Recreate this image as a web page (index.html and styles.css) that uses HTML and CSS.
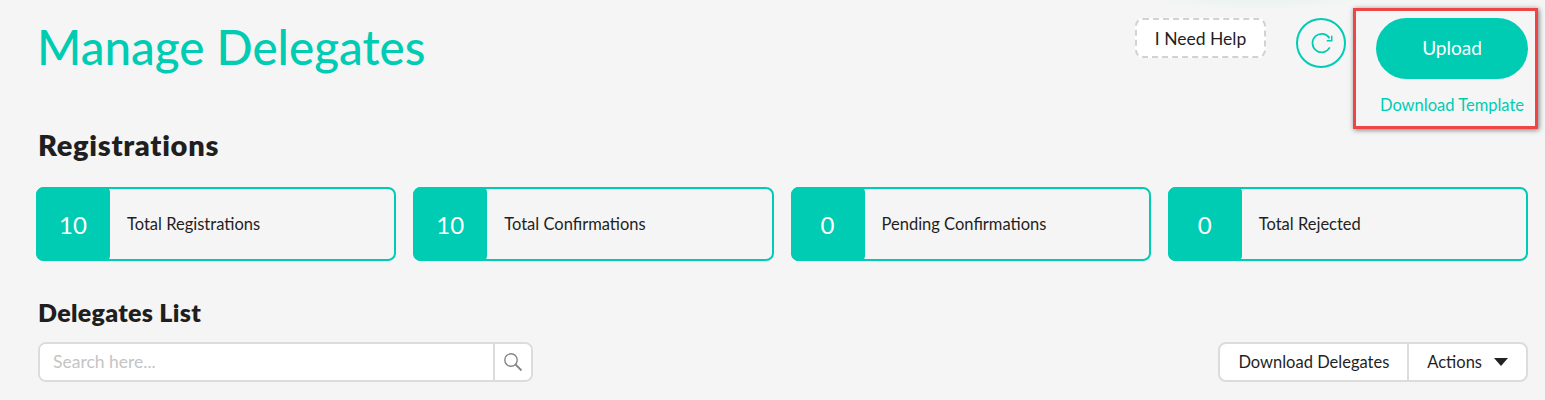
FILE: index.html
```html
<!DOCTYPE html>
<html lang="en">
<head>
  <meta charset="UTF-8" />
  <title>Manage Delegates</title>
  <link rel="stylesheet" href="styles.css">
</head>
<body>
  <div class="page">
    <div class="top">
      <h1>Manage Delegates</h1>
      <div class="top-actions">
        <a class="help" href="#">I Need Help</a>
        <a class="refresh" href="#" aria-label="Refresh">
          <svg width="24" height="24" viewBox="0 0 24 24" fill="none" stroke="#00ccb4" stroke-width="1.7">
            <path d="M20.5 7.2A9.2 9.2 0 1 0 20.8 16.4"/>
            <path d="M17.7 9.7h5V4.7" stroke-width="1.5"/>
          </svg>
        </a>
        <div class="upload-box">
          <a class="upload" href="#">Upload</a>
          <a class="template" href="#">Download Template</a>
          <div class="highlight"></div>
        </div>
      </div>
    </div>

    <h2>Registrations</h2>
    <div class="stats">
      <div class="stat"><div class="num">10</div><div class="label">Total Registrations</div></div>
      <div class="stat"><div class="num">10</div><div class="label">Total Confirmations</div></div>
      <div class="stat"><div class="num">0</div><div class="label">Pending Confirmations</div></div>
      <div class="stat"><div class="num">0</div><div class="label">Total Rejected</div></div>
    </div>

    <h3>Delegates List</h3>
    <div class="tools">
      <div class="search">
        <input type="text" placeholder="Search here...">
        <button aria-label="Search">
          <svg width="20" height="20" viewBox="0 0 20 20" fill="none" stroke="#858585" stroke-width="1.4">
            <circle cx="8" cy="8" r="6.2"/>
            <path d="M12.5 12.5l6 6" stroke-width="1.8"/>
          </svg>
        </button>
      </div>
      <div class="btn-group">
        <a href="#">Download Delegates</a>
        <a href="#">Actions <span class="caret"></span></a>
      </div>
    </div>
  </div>
</body>
</html>
```

FILE: styles.css
```css
* {
  box-sizing: border-box;
  margin: 0;
  padding: 0;
  font-family: "Lato", "Open Sans", sans-serif;
}

body {
  background: radial-gradient(ellipse 110px 10px at 1260px 0, #e9f3f0, transparent) #f5f5f5;
  color: #1f1f1f;
  height: 400px;
  overflow: hidden;
}

a {
  text-decoration: none;
  color: inherit;
}

.page {
  padding: 18px 17px 0 36px;
}

.top {
  display: flex;
  justify-content: space-between;
  align-items: flex-start;
  height: 110px;
}

h1 {
  margin-left: 1px;
  font-size: 47.6px;
  line-height: 58px;
  font-weight: 500;
  color: #00ccb4;
}

.top-actions {
  display: flex;
  align-items: flex-start;
}

.help {
  width: 131px;
  height: 40px;
  margin-right: 30px;
  display: flex;
  align-items: center;
  justify-content: center;
  background-color: #fff;
  border: 2px dashed #d2d2d2;
  border-radius: 8px;
  font-size: 17.5px;
}

.refresh {
  width: 50px;
  height: 50px;
  margin-right: 30px;
  display: flex;
  align-items: center;
  justify-content: center;
  border: 2px solid #00ccb4;
  border-radius: 50%;
}

.upload-box {
  position: relative;
  width: 152px;
}

.upload {
  display: flex;
  align-items: center;
  justify-content: center;
  height: 61px;
  padding-bottom: 2px;
  background-color: #00ccb4;
  border-radius: 31px;
  color: #fff;
  font-size: 19px;
}

.template {
  display: block;
  margin: 16px -5px 0;
  text-align: center;
  color: #00ccb4;
  font-size: 16.5px;
  line-height: 20px;
  white-space: nowrap;
}

.highlight {
  position: absolute;
  left: -23px;
  top: -10px;
  width: 185px;
  height: 121px;
  border: 3px solid #f04545;
  box-shadow: 1px 1px 5px rgba(0,0,0,0.5);
}

h2 {
  margin-left: 2px;
  font-size: 29px;
  line-height: 34px;
  font-weight: 800;
  letter-spacing: 0.7px;
  color: #1f1f1f;
}

.stats {
  display: grid;
  grid-template-columns: repeat(4, 1fr);
  gap: 17px;
  margin-top: 25px;
}

.stat {
  display: flex;
  height: 74px;
  border: 2px solid #00ccb4;
  border-radius: 8px;
  align-items: stretch;
}

.num {
  width: 74px;
  margin: -2px 0 -2px -2px;
  display: flex;
  align-items: center;
  justify-content: center;
  background-color: #00ccb4;
  border-radius: 8px 5px 5px 8px;
  color: #fff;
  font-size: 24px;
}

.label {
  display: flex;
  align-items: center;
  padding-left: 17px;
  font-size: 16.5px;
}

h3 {
  margin: 37px 0 0 2px;
  font-size: 25px;
  line-height: 29px;
  font-weight: 800;
  letter-spacing: 0.3px;
  color: #1f1f1f;
}

.tools {
  display: flex;
  justify-content: space-between;
  align-items: flex-start;
  margin-top: 15px;
  padding-left: 2px;
}

.search {
  display: flex;
  width: 495px;
  height: 40px;
  background-color: #fff;
  border: 2px solid #dcdcdc;
  border-radius: 8px;
  overflow: hidden;
}

.search input {
  flex-grow: 1;
  border: none;
  outline: none;
  padding: 0 0 2px 13px;
  font-size: 17.5px;
  color: #333;
}

.search input::placeholder {
  color: #c4c4c4;
}

.search button {
  width: 38px;
  display: flex;
  align-items: center;
  justify-content: center;
  background-color: #fff;
  border: none;
  border-left: 2px solid #dcdcdc;
}

.btn-group {
  display: flex;
  height: 40px;
  background-color: #fff;
  border: 2px solid #dcdcdc;
  border-radius: 8px;
  font-size: 16.5px;
}

.btn-group a {
  display: flex;
  align-items: center;
  padding: 0 18px 1px;
}

.btn-group a + a {
  border-left: 2px solid #dcdcdc;
}

.caret {
  margin-left: 12px;
  border-left: 7px solid transparent;
  border-right: 7px solid transparent;
  border-top: 8px solid #222;
}
```
